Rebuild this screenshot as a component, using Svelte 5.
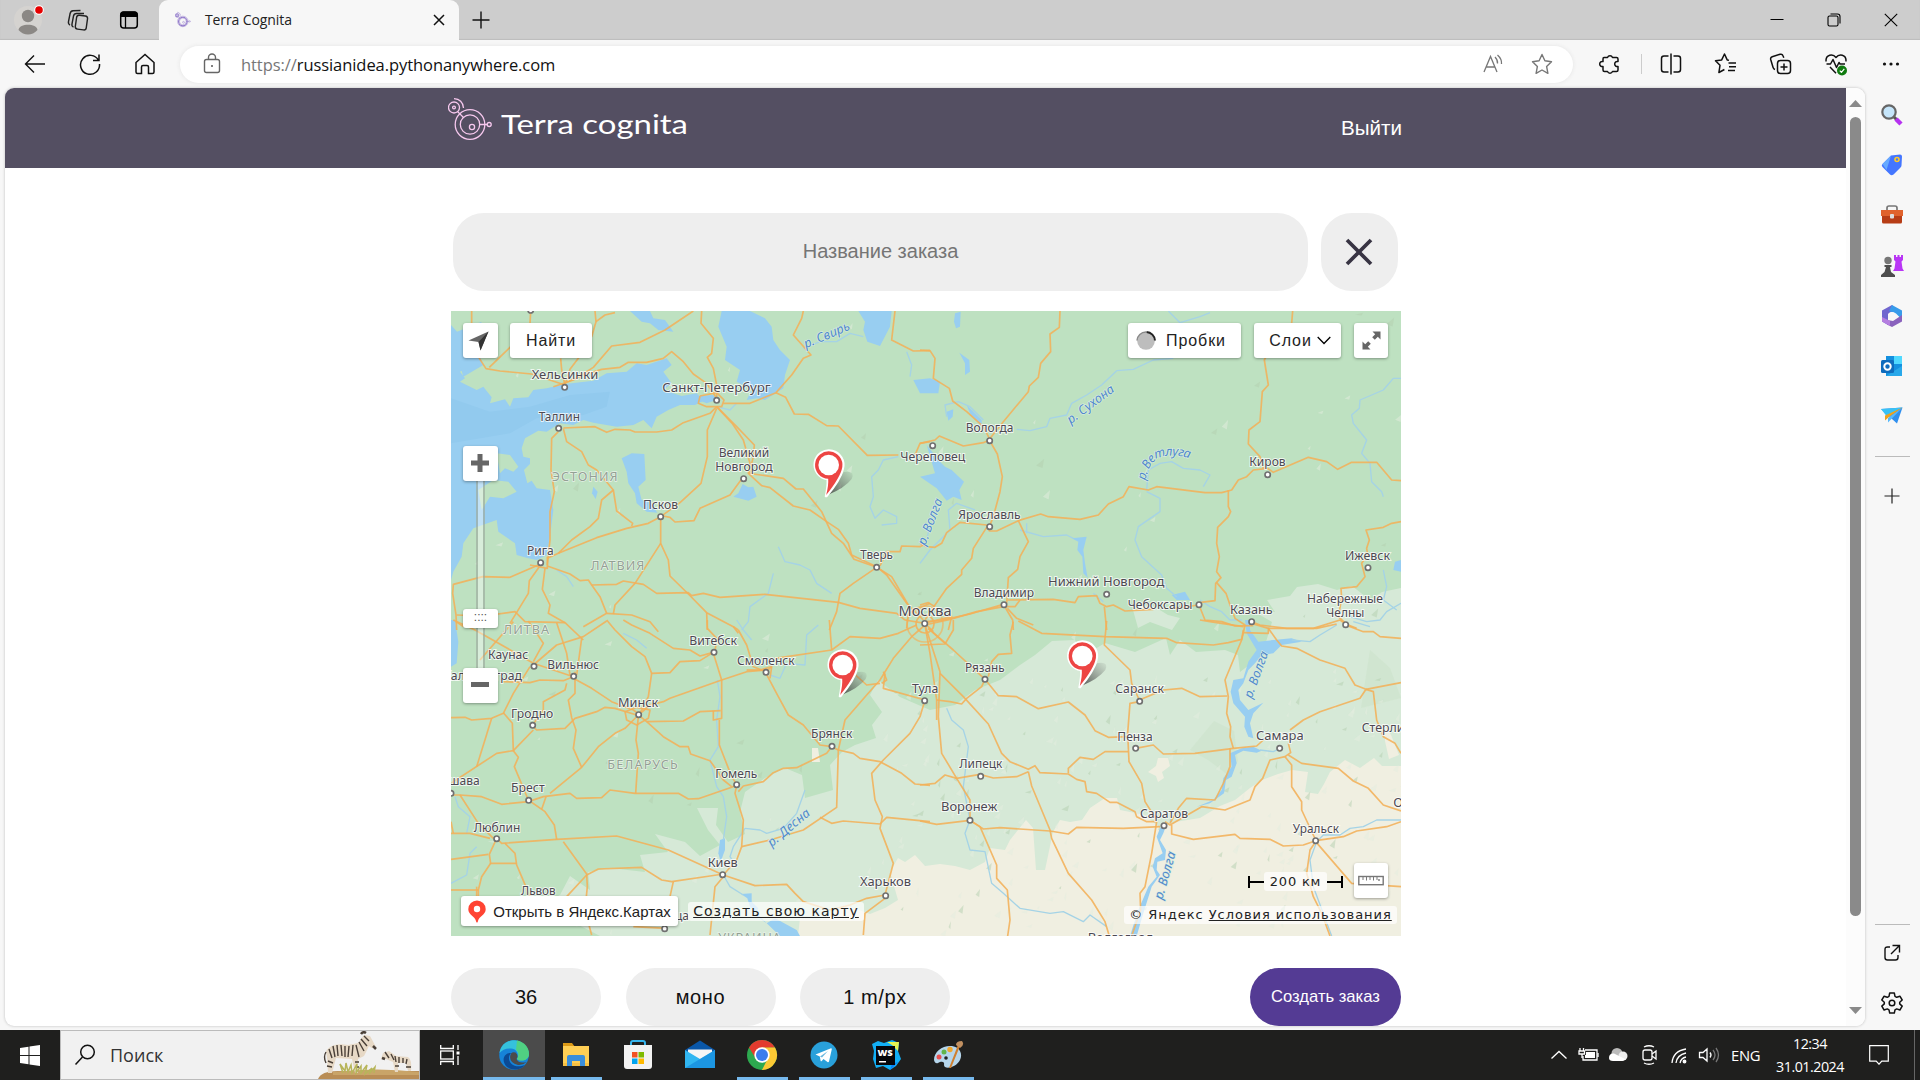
<script>
  const line = (s) => 'M' + s.trim().split(/\s+/).join('L');

  // The map is split into four tiles, each drawn in third-of-a-pixel units.
  const tiles = [
    {
      x: 450, y: 310,
      seas: [
        '3,45 25,70 45,60 30,110 55,130 35,150 60,170 30,185 45,205 30,215 80,240 100,230 125,262 120,280 165,268 180,290 190,265 235,262 250,240 290,235 345,222 430,212 470,190 530,185 560,160 590,165 650,145 665,165 640,185 665,220 640,240 695,258 740,250 760,272 735,285 690,285 655,300 620,320 605,355 580,330 550,345 500,350 430,338 400,330 370,345 330,340 290,365 265,362 225,385 215,415 220,440 240,445 240,462 222,480 232,520 245,512 260,535 300,540 310,600 300,680 290,735 260,750 235,745 200,735 195,700 145,665 140,630 70,655 40,700 35,740 10,785 3,810',
        '785,3 815,3 805,50 830,110 825,150 870,180 860,215 905,240 890,270 920,265 945,270 1000,235 1005,195 1020,150 990,120 970,90 965,50 945,25 900,3',
        '1225,3 1245,35 1240,60 1252,95 1290,108 1320,50 1325,3',
        '515,445 545,430 583,432 587,510 565,530 575,570 600,575 622,608 590,605 560,580 555,550 535,520 530,485',
        '850,560 865,550 878,522 895,532 910,530 920,560 895,572',
        '1390,210 1440,205 1470,215 1465,250 1410,250',
        '430,530 443,545 437,567 426,550',
        '540,3 600,3 610,25 645,30 670,65 625,60 600,40 575,35',
        '10,70 95,35 70,90 100,165 40,200 20,130',
        '740,258 790,255 800,270 770,280 750,272'
      ],
      land: ['140,430 180,435 205,470 190,485 165,475 150,490', '85,540 130,510 175,515 200,545 160,565 120,560 95,600'],
      rivers: ['1060,115 1110,95 1160,95 1200,70 1240,80', '1370,125 1385,165 1380,200', '1345,440 1300,450 1285,480 1265,500 1270,560 1260,590 1275,625 1300,600 1340,620 1340,640 1295,645', '985,710 1005,755 1050,765 1080,780 1100,820 1145,850', '970,790 955,850 900,890 895,935 875,960', '1440,645 1430,690', '320,780 350,800 370,830', '800,290 840,300 860,280'],
      roads: [
        '65,3 65,40 88,145 108,176 150,183 245,192 345,225', '242,5 240,40 180,112 118,172', '435,3 438,35 425,80 385,145 360,178 345,225', '438,35 465,15 495,8', '332,145 335,180 345,225',
        '310,230 370,210 430,172 485,108 570,97 645,60 730,3', '345,218 400,195 455,178 510,172 535,157 590,157 640,145 665,125 700,155 730,192 770,220 800,265',
        '755,3 753,40 790,85 785,130 772,142 790,175 800,225 800,265', '1060,3 1055,25 1030,75 1083,135 1060,145 1025,195 978,248 900,280 820,280', '978,248 1007,262 1033,312 1075,313 1130,347 1165,348 1252,436 1345,435',
        '1335,3 1325,90 1390,123 1440,122', '340,354 435,350 470,367 495,358 540,360 555,366 620,366 665,360 700,338 780,310 800,290', '325,365 305,385 303,480 313,545 300,605 300,690 292,765', '340,356 350,395 395,425 415,465 440,480 490,540 500,603 548,640 545,648',
        '490,540 455,570 445,625 420,650 365,690 325,730', '292,745 325,730 440,683 530,655 595,640 632,620', '632,620 690,578 753,520 772,440 772,360 800,295', '640,618 660,622 675,636 732,632 750,595 840,555 880,500',
        '800,290 848,342 880,390 900,460 895,490 935,527 960,533 1030,588 1080,600 1130,635 1165,658 1195,700 1205,735 1280,770 1310,795 1370,880 1420,930', '800,290 860,350 913,405 910,440 898,490 1000,505 1038,537 1060,537 1115,605 1145,670 1180,700 1212,748 1280,772 1325,800 1375,885',
        '632,620 632,700 655,750 660,798 715,852 770,908 850,950 865,970', '632,700 555,820 495,885 490,912', '292,768 360,792 390,812 415,810 425,825 500,823 520,813 580,823 620,850 715,848 725,857 760,850 810,862 945,853 1165,877 1230,895 1340,910 1365,930',
        '265,765 180,802 98,800 10,823 8,850 18,915 20,960', '268,770 238,812 235,850 180,940', '285,775 277,838 300,885 295,910 345,938', '425,825 450,860 470,910 400,950', '470,910 545,915 600,935 625,965', '20,915 100,918 195,905 225,935 345,938 400,990', '770,908 772,960', '1280,772 1210,820 1170,850 1165,877 1160,905 1138,960', '1290,768 1310,725 1350,725 1355,708 1410,710 1430,700', '240,765 292,775 292,740', '750,258 800,248 822,270 815,290 770,290 745,280 750,258', '1440,395 1410,400 1395,435', '1370,955 1375,910 1440,880', '1365,930 1425,940 1450,965', '18,935 40,950'
      ],
      cities: [
        ['Хельсинки', 245, 445, 208, 344, 232], ['Санкт-Петербург', 637, 962, 245, 800, 271], ['Таллин', 266, 390, 333, 326, 355], ['Великий', 806, 958, 440], ['Новгород', 796, 968, 482, 881, 506], ['Псков', 579, 684, 598, 632, 620], ['Рига', 231, 311, 736, 272, 758], ['Тверь', 1231, 1329, 746, 1280, 772], ['', 0, 0, 0, 242, 1]
      ],
      countries: [['ЭСТОНИЯ', 305, 503, 513], ['ЛАТВИЯ', 422, 583, 781]],
      streams: [['р. Свирь', 1068, 115, -23, 146]]
    },
    {
      x: 920, y: 310,
      seas: ['105,10 122,5 120,50 108,55 102,35', '118,128 148,150 150,185 135,195 135,160', '20,405 60,455 75,470 95,480 132,515 118,540 125,570 100,560 80,572 50,535 0,500 45,490', '140,285 160,305 185,330 185,350 150,310', '455,685 500,680 490,720 495,760 503,803 490,790 487,740 472,720 475,695', '755,855 795,845 810,870 770,870', '1425,755 1443,750 1443,785 1420,780', '80,305 100,298 98,320 85,332'],
      land: [],
      rivers: ['80,320 75,285 115,275 150,290 190,330', '290,358 330,362 380,350 390,325 440,315 455,280 500,255 545,225 590,182 640,178 700,150 760,145', '745,3 780,38 840,20 870,8', '680,540 685,480 720,460 755,455 790,475 840,480 870,495 850,530', '680,545 720,565 720,605 655,650 645,690 665,740 725,795 740,835 770,860', '300,660 370,680 440,675 460,685', '840,870 870,890 905,905 930,930 965,930', '1443,205 1420,205 1390,240 1320,270 1318,295 1295,315 1300,340 1340,390 1325,430 1350,460 1355,515 1385,545 1390,560', '520,850 550,875', '1290,920 1340,935 1380,930 1400,905 1443,880', '1390,780 1400,830 1390,870 1430,900', '0,760 30,720 90,660 85,600 110,580 165,600', '320,640 320,670'],
      roads: [
        '0,120 30,122 45,145 40,205 88,235 98,273 140,305 190,350 208,385', '420,3 418,52 390,72 392,125 362,160 355,202 328,228 325,245 250,335 208,388', '0,400 45,390 58,378 130,408 190,398 208,390', '208,390 232,432 247,500 240,545 220,620 208,650',
        '200,645 208,663 230,663 295,632 362,612 385,620 480,628 535,615 565,582 610,560 627,530 685,540 710,530 855,548 905,548 935,540 955,510 980,500 1000,480 1043,475 1060,487 1165,442 1220,455 1253,478 1295,457 1370,457 1415,510 1443,512',
        '1118,3 1115,40 1070,80 1033,150 1045,225 1027,245 1020,335 987,360 985,402 1020,440 1030,475', '925,540 925,590 932,605 925,620 893,652 890,700 898,740 890,785 903,803 887,820 885,872 837,878', '890,818 918,850 930,885 945,925 975,945 965,990',
        '200,652 160,715 155,745 125,780 125,793 80,835 45,885 15,930', '295,632 325,695 300,740 293,778 265,803 260,880', '15,935 60,932 150,912 250,883', '15,945 90,928 170,905 250,890 285,890 300,870', '262,870 400,868 465,878 475,860 530,857 540,880 560,890 580,885 615,903 700,898', '760,895 837,885 855,930 905,935 945,948 1000,947',
        '250,883 278,930 280,960', '262,895 290,925 340,945', '553,890 560,960', '1443,635 1415,640 1390,652 1338,660 1348,690 1340,715 1343,735 1325,760 1335,800 1310,830 1263,835 1265,865 1255,920 1277,940', '995,935 1020,945 1100,955 1180,955 1260,930 1277,942 1310,955', '0,700 20,710 45,712 65,700 80,668 120,637 200,645', '0,885 25,878 45,890', '10,940 95,920 85,960'
      ],
      cities: [['Вологда', 137, 280, 367, 209, 392], ['Череповец', -59, 136, 453, 38, 407], ['Ярославль', 115, 302, 626, 209, 650], ['Киров', 988, 1097, 468, 1043, 494], ['Ижевск', 1275, 1410, 751, 1344, 773], ['Нижний Новгород', 384, 733, 828, 560, 853], ['Владимир', 161, 342, 860, 252, 884], ['Чебоксары', 623, 817, 896, 837, 884], ['Казань', 930, 1058, 913, 995, 935], ['Набережные', 1161, 1389, 880], ['Челны', 1219, 1333, 921, 1277, 944]],
      countries: [],
      streams: [['р. Сухона', 452, 343, -37, 167], ['р. Волга', 16, 708, -69, 147]]
    },
    {
      x: 450, y: 620,
      seas: ['3,0 15,0 25,65 20,130 3,140', '810,660 825,655 825,690 812,725 805,700', '873,822 905,820 905,845 925,865 915,885 950,910 975,895 1040,930 1050,948 990,948 940,900 900,860 892,835'],
      land: [],
      rivers: ['1105,15 1070,45 1065,135 1010,130 990,175 960,165', '905,60 880,30 860,0', '802,180 810,230 800,300 805,380 780,420 800,500 820,530 830,590 820,660', '1065,510 1040,580 1000,625 950,640 930,630 885,625', '860,740 840,710 850,680 885,625', '820,765 840,800 880,825', '15,530 25,560 60,590 50,640', '3,790 50,765 60,700 80,680', '590,85 560,60 520,40'],
      roads: [
        '3,525 30,525 95,530 155,553 235,545 280,530 360,520 380,535 455,533 480,510 555,520 685,520 715,537 745,536 845,502 860,495', '30,525 85,610 130,655', '3,605 10,640', '3,640 60,640 120,655', '140,655 155,670 320,658 500,648 655,690 820,765', '140,655 118,703 122,730 200,730', '165,670 195,700 200,735 215,770 240,830', '3,718 115,703', '122,730 95,770 85,810 85,850',
        '235,540 285,575 313,615 320,658', '275,568 288,530', '340,665 410,762 412,800 405,870 425,945', '350,830 410,765 445,747 575,742 635,780 665,785 780,768 820,762', '670,785 660,830 650,900 643,925', '300,520 395,442 445,380 495,340 525,325 565,285', '395,442 370,385 378,330 365,293 355,240 375,220 375,170',
        '860,497 855,520 880,600 875,680 860,720 820,765', '875,680 960,660 1060,630 1160,562 1165,390 1185,300 1250,225 1290,180 1330,115 1385,50 1425,15', '1145,380 1130,400 1040,443 1000,445 970,458 940,485 880,498 865,515', '1145,380 1165,390 1210,400 1230,415 1290,425 1355,460 1395,492 1440,496', '948,160 985,230 1015,285 1060,315 1110,375 1145,380',
        '565,285 600,255 640,245 660,235 815,180 890,155 948,150', '590,305 700,303 750,275 812,272', '565,285 590,305 640,350 690,380 715,380 722,402 780,422 800,450 820,480 845,500', '565,290 558,360 565,400 557,520', '560,285 495,265 465,262 440,275 375,295 345,325 260,330 248,318', '570,285 550,270 485,245 425,205 370,175', '525,275 560,262 600,270 595,295 560,315 530,300 525,275',
        '370,170 340,182 270,180 240,188 160,185', '370,170 250,130 190,95 75,30 10,0', '380,165 395,55', '375,170 375,155', '250,135 320,75 400,50 470,3', '250,125 280,70 235,3', '320,8 350,100 360,165', '240,140 190,220 160,280 125,295 65,300 45,292 3,293', '125,295 80,440', '3,490 140,400 190,392 250,330', '190,392 205,412 193,440 235,540', '190,392 187,310 160,278', '248,315 280,270 280,245 345,210 350,190',
        '790,100 815,180 815,295 790,300 790,272', '808,300 808,375 845,470 858,490', '790,97 750,108 720,90 670,85 600,40 545,15 520,0', '772,0 772,25 800,55 795,95', '790,97 750,122 690,125 660,158 605,160 595,230 570,280', '605,160 585,110 545,80 495,30 470,0', '865,30 890,75 910,140 948,155 965,140', '850,20 865,30', '975,115 1145,90 1200,50 1290,55 1345,40 1400,15', '1145,90 1138,0', '1200,150 1250,195 1290,190', '1305,160 1300,205 1425,240', '1300,155 1310,180 1295,190',
        '1425,240 1410,290 1380,340 1300,420 1265,460 1275,540 1297,590 1290,625 1330,730 1305,825', '1110,592 1145,610 1180,603 1290,612 1310,592 1440,605', '820,765 915,797 1010,793 1035,820 1060,845 1140,870 1200,855 1250,835 1305,825', '820,770 795,800 780,945', '1305,835 1245,880 1240,945', '3,810 85,810', '948,150 890,150', '650,925 550,920', '930,150 965,140 960,175', '90,120 190,5', '80,800 80,830'
      ],
      cities: [['Витебск', 718, 861, 76, 792, 97], ['Каунас', 114, 235, 116, 252, 139], ['Вильнюс', 292, 447, 148, 371, 169], ['Смоленск', 861, 1034, 135, 948, 157], ['Калининград', -20, 216, 180], ['Минск', 504, 625, 262, 566, 284], ['Гродно', 183, 310, 293, 248, 316], ['Брянск', 1083, 1207, 355, 1146, 379], ['Варшава', -69, 89, 495, 3, 520], ['Брест', 183, 284, 516, 236, 541], ['Гомель', 796, 922, 473, 860, 494], ['Люблин', 71, 211, 636, 140, 656], ['Киев', 773, 863, 742, 818, 764], ['Львов', 213, 317, 824], ['Харьков', 1230, 1383, 799, 1307, 827], ['Винница', 563, 717, 901, 644, 926]],
      countries: [['ЛИТВА', 160, 297, 43], ['БЕЛАРУСЬ', 472, 683, 447], ['УКРАИНА', 805, 992, 966]],
      streams: [['р. Десна', 965, 682, -40, 154]]
    },
    {
      x: 920, y: 620,
      seas: ['975,0 990,0 990,30 1015,65 1060,60 1115,55 1145,65 1085,75 1060,100 1025,105 1005,130 985,150 970,190 955,210 960,240 985,270 1030,248 1000,280 990,310 1000,355 985,350 973,320 975,290 940,250 932,215 940,180 970,175 985,125 1010,90 980,40', '965,385 1000,380 1025,392 1010,398 970,392 945,405 950,430 935,470 918,480 912,520 870,550 830,560 880,540 905,510 910,475 935,440 930,400', '710,650 720,625 740,610 730,640 720,660 738,690 735,720 712,725 710,750 720,765 695,800 670,880 650,948 630,948 655,870 685,800 710,770 698,740 705,715 728,700'],
      land: [],
      rivers: ['80,265 95,300 130,330 145,380 130,500 150,600 135,640 150,690 195,695 215,790 250,820 300,865 390,880 430,875 490,905 510,885 560,920', '1020,390 1060,395 1080,385', '1115,60 1170,65 1200,45 1250,15', '1443,600 1370,600 1330,620 1290,625 1260,645 1210,645 1190,665 1170,720 1180,800 1235,948', '1300,5 1350,20', '750,605 755,590'],
      roads: [
        '25,25 100,90 195,178 235,227 290,230 355,266 445,246 495,285 525,332 565,352 625,350', '195,178 185,200 140,235 125,252 90,245 50,240', '205,170 215,125 235,103 275,100 270,45 280,5', '15,15 60,155 55,290 65,400 110,475 150,540 150,600', '15,15 30,100 50,240 50,300', '60,160 130,230 205,312 245,400 270,425 325,448 345,437 360,458 445,462 470,478 495,485 500,515 530,520 570,547 590,547 645,575 650,590 680,605 710,605',
        '445,460 445,445 480,412 520,418 555,395 625,395', '0,495 45,490 75,465 110,475 180,463 220,474 290,470 325,455', '0,603 50,613 150,601 190,627 240,623 390,633 445,642 470,622 610,625 720,620', '325,455 335,498 390,630 395,655 445,760 515,840 555,905 568,948', '150,601 180,620 230,735 230,775 262,810 270,900 263,948',
        '560,3 553,75 630,150 635,190 658,240', '295,3 365,40 555,50 740,55 770,68 880,75 925,68 965,58 970,30', '658,245 630,250 623,340 627,425 665,490 675,545 710,600', '658,240 730,210 785,205 840,230 922,228', '965,60 915,180 925,230 920,280 932,320 930,350 940,385', '647,385 700,375 730,402 825,400 940,385 1010,378 1030,360', '930,385 930,440 910,490 885,540 800,535 775,565 750,610',
        '735,605 750,615 845,560 915,570 990,540 1005,500 1028,475 1050,420 1095,410 1112,398 1105,370', '1110,330 1150,300 1200,275 1320,235 1338,208 1305,195 1275,145 1200,120 1130,85 1085,78 1070,60 1045,25', '1338,208 1443,188', '1338,208 1360,215 1370,300 1390,350 1425,370 1443,400', '1095,410 1115,435 1115,500 1145,545 1145,570 1187,660', '1105,405 1145,430 1255,445 1300,483 1345,505 1390,555 1443,573',
        '755,615 755,642 820,658 945,643 960,655 1050,658 1090,678 1150,675 1187,662 1270,650 1310,633 1400,620 1443,605', '1187,665 1170,690 1160,760 1180,830 1205,880 1230,948', '1187,665 1295,790 1443,800', '710,605 695,700 675,800 660,820 662,870 635,948', '970,38 1045,40 1045,25 1000,12', '1277,15 1330,35 1360,35 1380,50 1443,55', '840,0 870,5 970,20', '1045,25 1190,25 1250,12', '0,75 75,72 100,30 100,0', '25,25 75,70'
      ],
      cities: [['Рязань', 135, 254, 157, 195, 178], ['Саранск', 586, 732, 219, 659, 244], ['Тула', -24, 55, 218, 14, 242], ['Пенза', 592, 698, 364, 647, 385], ['Самара', 1008, 1151, 360, 1079, 385], ['Стерлитамак', 1325, 1560, 337], ['Липецк', 118, 247, 445, 182, 469], ['Воронеж', 63, 232, 574, 150, 601], ['Саратов', 660, 804, 593, 732, 617], ['Уральск', 1118, 1257, 638, 1187, 662], ['Оренбург', 1420, 1600, 561], ['Волгоград', 503, 700, 966]],
      countries: [],
      streams: [['р. Волга', 995, 237, -70, 147], ['р. Волга', 727, 840, -74, 147]]
    }
  ];

  // Scattered clearings: small pale facets with a fixed seed.
  let seed = 41;
  const rnd = () => (seed = (seed * 16807) % 2147483647) / 2147483647;
  const facets = Array.from({ length: 330 }, (_, i) => {
    const x = 451 + rnd() * 950;
    const y = i < 130 ? 311 + rnd() * 625 : 680 + rnd() * 250;
    const px = i < 130 ? x : 890 + rnd() * 511;
    const w = 2 + rnd() * 6, h = 2 + rnd() * 5;
    return { d: `M${px},${y}l${w},${-h}l${-w * 0.2},${h * 1.4}z`, dark: rnd() > 0.65 };
  });

  const markers = [[828.7, 465], [842.7, 665], [1082.3, 656]];
  const running = new Set(['explorer', 'chrome', 'telegram', 'webstorm', 'paint', 'edge']);
  const apps = ['edge', 'explorer', 'store', 'mail', 'chrome', 'telegram', 'webstorm', 'paint'];
  const bar = ['puzzle', 'split', 'favs', 'collections', 'health', 'more'];
  const side = ['search', 'tag', 'tools', 'games', 'm365', 'outlook', 'send'];
  const tray = ['up', 'battery', 'cloud', 'meet', 'wifi', 'sound'];
</script>

{#snippet brand()}
  <g fill="none" stroke-width="1.3">
    <circle cx="6" cy="9.5" r="5.5" /><circle cx="6" cy="9.5" r="1.4" />
    <path d="M6 .7C12 1 15 5 15.500 10M9.500 13.500L16 20" />
    <circle cx="22" cy="26.500" r="14.800" /><circle cx="22" cy="26.500" r="9.700" /><circle cx="24" cy="29" r="2.600" />
    <path d="M31 26.500h8" /><circle cx="41.200" cy="26.500" r="2" />
  </g>
{/snippet}

<div class="screen">
  <div class="tabs">
    <div class="slot avatar"><svg width="32" height="36" viewBox="0 0 32 36"><circle cx="16" cy="18" r="14" fill="#d5d3d0" /><circle cx="16" cy="14" r="6.200" fill="#8b8885" /><path d="M6.500 28C7 21 25 21 25.500 28C20 34 12 34 6.500 28z" fill="#8b8885" /><circle cx="27" cy="8" r="4.800" fill="#fff" /><circle cx="27" cy="8" r="3.800" fill="#e60000" /></svg></div>
    <div class="slot spaces"><svg width="22" height="22" viewBox="0 0 22 22" fill="none" stroke="#222" stroke-width="1.400"><rect x="9" y="6.500" width="11" height="14" rx="2.500" transform="rotate(8 14 13)" /><path d="M6.500 18Q4.500 17.500 5 15L6.500 7Q7 4.500 9.500 4.500L17 4.500M3 16Q1 15 1.500 12.500L3 5Q3.500 2 6 1.800L13.500 1.500" /></svg></div>
    <div class="slot actions"><svg width="20" height="20" viewBox="0 0 20 20"><rect x="1.700" y="2" width="16.600" height="16" rx="3" fill="none" stroke="#000" stroke-width="1.500" /><path d="M1.500 7V4.500Q1.500 1.500 4.500 1.500h11Q18.500 1.500 18.500 4.500V7z" /><path d="M6.500 7v11" stroke="#000" stroke-width="1.300" /></svg></div>
    <div class="tab">
      <svg class="fav" width="16" height="18" viewBox="0 0 45 45" stroke="#8d74c9"><g>{@render brand()}</g><circle cx="22" cy="27" r="12" fill="none" stroke-width="3" /><circle cx="6" cy="9.500" r="4" fill="none" stroke-width="2.500" /></svg>
      <span>Terra Cognita</span>
      <svg width="12" height="12" viewBox="0 0 12 12"><path d="M1 1l10 10M11 1L1 11" stroke="#111" stroke-width="1.500" /></svg>
    </div>
    <div class="slot newtab"><svg width="18" height="18" viewBox="0 0 18 18"><path d="M9 .5v17M.5 9h17" stroke="#111" stroke-width="1.400" /></svg></div>
    <div class="win">
      <svg width="14" height="14" viewBox="0 0 14 14"><path d="M.5 6.500h13" stroke="#000" /></svg>
      <svg width="14" height="14" viewBox="0 0 14 14" fill="none" stroke="#000" stroke-width="1.100"><rect x="1" y="3" width="10" height="10" rx="1.500" /><path d="M3.500 1h7Q13 1 13 3.500v7" /></svg>
      <svg width="14" height="14" viewBox="0 0 14 14"><path d="M.8.8l12.400 12.400M13.200.8L.8 13.200" stroke="#000" stroke-width="1.100" /></svg>
    </div>
  </div>

  <div class="toolbar">
    <div class="nav">
      <svg width="24" height="24" viewBox="0 0 24 24" fill="none" stroke="#111" stroke-width="1.400"><path d="M22 12H2.500M11 3.500L2.500 12l8.500 8.500" /></svg>
      <svg width="24" height="24" viewBox="0 0 24 24" fill="none" stroke="#111" stroke-width="1.500"><path d="M20.500 8.500A9.500 9.500 0 1 0 21.500 12M21 2.500v6h-6" /></svg>
      <svg width="24" height="24" viewBox="0 0 24 24" fill="none" stroke="#111" stroke-width="1.500"><path d="M3 10.500L12 2.500l9 8V20q0 1.500-1.500 1.500h-4V15q0-1.500-1.500-1.500h-4Q8.500 13.500 8.500 15v6.500h-4Q3 21.500 3 20z" /></svg>
    </div>
    <div class="address">
      <svg width="20" height="22" viewBox="0 0 20 22" fill="none" stroke="#666" stroke-width="1.400"><rect x="2.500" y="6.500" width="15" height="13" rx="2" /><path d="M6.500 6.500V4.500a3.500 3.500 0 0 1 7 0v2" /><circle cx="10" cy="13" r="1" fill="#555" stroke="none" /></svg>
      <p class="url"><i>https://</i>russianidea.pythonanywhere.com</p>
      <div class="inbar">
        <svg width="22" height="22" viewBox="0 0 22 22" fill="none" stroke="#777" stroke-width="1.300"><path d="M2 19L8.500 3.500L15 19M4.500 14h8M13 4q3 3 2.500 6.500M15.500 2q4.500 4 4 9" /></svg>
        <svg width="22" height="22" viewBox="0 0 22 22" fill="none" stroke="#777" stroke-width="1.400" stroke-linejoin="round"><path d="M11 1.500l2.900 6.300 6.600.9-4.900 4.700 1.300 6.900L11 17l-5.900 3.300 1.300-6.900L1.500 8.700l6.600-.9z" /></svg>
      </div>
    </div>
    <div class="actions-right">
      {#each bar as name}
        <svg width="24" height="24" viewBox="0 0 24 24" fill="none" stroke="#111" stroke-width="1.500" stroke-linejoin="round">
          {#if name === 'puzzle'}<path d="M6 5.500h3.500a2.700 2.700 0 0 1 5 0H18.500q1.500 0 1.500 1.500V9.500a2.600 2.600 0 1 0 0 5V18q0 1.500-1.500 1.500h-4a2.700 2.700 0 0 1-5 0H6.500Q5 19.500 5 18v-3.500a2.600 2.600 0 1 1 0-5V7q0-1.500 1-1.500z" />
          {:else if name === 'split'}<path d="M9.500 4H5Q2.500 4 2.500 6.500v11Q2.500 20 5 20h4.500M14.500 4H19q2.500 0 2.500 2.500v11Q21.500 20 19 20h-4.500M12 1.500v21" />
          {:else if name === 'favs'}<path d="M15 8.200l-1.800-.3L10.500 2 7.700 7.900l-6.200.9 4.500 4.500-1.100 7.200 5.500-3M14.500 11H22M15 14.800h7M14 18.500h7" />
          {:else if name === 'collections'}<rect x="8.500" y="8.500" width="13" height="13" rx="3" /><path d="M15 11.500v7M11.500 15h7M6 17.500Q4.500 17 4 15.200L1.700 7.500Q1.200 5.500 3.200 4.700L11 2.300q2.300-.6 3 1.400l.8 2" />
          {:else if name === 'health'}<path d="M2 9.500C1.500 2 9 1.500 12 5.500C15 1.500 22.500 2 22 9.500M2.500 12H6.500l2.500-4.500 3.500 8 2.500-5 1 1.500H21M6 15l6 6.200" /><circle cx="18" cy="18.500" r="5" fill="#0f7b0f" stroke="none" /><path d="M15.800 18.700l1.600 1.600 2.900-3.400" stroke="#fff" stroke-width="1.200" />
          {:else}<g fill="#111" stroke="none"><circle cx="5.500" cy="12" r="1.600" /><circle cx="12" cy="12" r="1.600" /><circle cx="18.500" cy="12" r="1.600" /></g>{/if}
        </svg>
        {#if name === 'puzzle'}<b></b>{/if}
      {/each}
    </div>
  </div>

  <div class="body">
    <main class="page">
      <div class="content">
        <header>
          <svg class="logo" width="260" height="52" viewBox="0 0 260 52"><g stroke="#f6c8ee">{@render brand()}</g><text x="53" y="35.500" textLength="187" lengthAdjust="spacingAndGlyphs">Terra cognita</text></svg>
          <a class="exit" href="#exit">Выйти</a>
        </header>
        <div class="form">
          <div class="title-row">
            <div class="title">Название заказа</div>
            <button class="close" aria-label="Закрыть"><svg width="28" height="28" viewBox="0 0 28 28"><path d="M2 2l24 24M26 2L2 26" stroke="#383443" stroke-width="3.700" /></svg></button>
          </div>

          <div class="map">
            <svg class="canvas" width="950" height="625" viewBox="451 311 950 625">
              <defs>
                <linearGradient id="shade" x1="0" y1="1" x2="1" y2="0"><stop offset="0" stop-color="#333" stop-opacity=".8" /><stop offset="1" stop-color="#555" stop-opacity=".05" /></linearGradient>
                <path id="vetluga" d="M676,512 Q690,447 728,440 Q775,430 825,452" />
              </defs>
              <rect x="451" y="311" width="950" height="625" fill="#bee1c1" />
              <path fill="#d6e9d7" d="M1401,588L1382,592L1370,600L1352,586L1337,590L1318,584L1297,587L1290,596L1267,600L1275,612L1255,612L1272,622L1262,655L1240,672L1238,655L1225,650L1196,652L1180,640L1170,655L1166,638L1135,652L1105,643L1085,655L1075,640L1052,641L1035,655L1020,665L1000,680L975,690L955,705L930,710L900,697L878,680L870,695L882,712L872,725L876,738L855,745L842,752L830,765L833,790L805,798L802,775L785,768L765,778L745,792L740,812L745,834L728,842L716,825L718,808L697,808L708,830L720,845L700,856L685,842L655,834L668,852L640,855L645,872L610,868L588,872L590,890L570,876L560,895L540,905L600,936L1401,936Z" />
              <path fill="#d6e9d7" d="M1133,610L1150,604L1168,615L1180,618L1172,630L1150,622L1138,628Z" />
              <path fill="#f0efe1" d="M1401,766L1382,766L1374,758L1360,768L1345,760L1330,772L1324,784L1318,794L1305,792L1308,772L1292,770L1278,774L1262,780L1250,788L1235,800L1220,806L1200,818L1175,822L1160,828L1145,815L1120,810L1117,798L1105,798L1090,808L1082,820L1070,822L1060,820L1053,832L1045,870L1036,870L1033,828L1026,820L1010,840L1005,850L990,848L985,862L970,870L955,866L940,864L925,866L915,855L905,862L898,858L890,872L898,900L885,908L870,914L845,905L820,920L800,918L798,936L1401,936Z" />
              <path fill="#f0efe1" d="M1148,772l8,-6l2,-8l10,0l2,8l-8,6l2,6l-6,4l-2,-6zM1384,725l7,10l8,20l-10,4l-4,-18zM812,748l6,0l2,14l-8,0z" />
              <path fill="#c5dfc4" d="M1190,750l18,10l20,15l10,-14l-4,-30l-20,-10zM1370,650l20,18l11,30l-40,10z" opacity=".35" />
              {#each facets as f}<path d={f.d} fill={f.dark ? '#b3d0b0' : '#e3eedf'} opacity=".5" />{/each}
              {#each tiles as t}
                <g transform="translate({t.x} {t.y}) scale(.33333)">
                  {#each t.seas as s}<path d={line(s) + 'Z'} fill="#98cef1" />{/each}
                  {#if t.y === 310 && t.x === 450}<path d="M3,265L120,305L240,290L360,255L480,245L470,290L400,315L260,325L180,370L3,400Z" fill="#92caee" />{/if}
                  {#each t.land as s}<path d={line(s) + 'Z'} fill="#bee1c1" />{/each}
                  {#each t.rivers as s}<path d={line(s)} class="river" />{/each}
                </g>
              {/each}
              {#each tiles as t}
                <g transform="translate({t.x} {t.y}) scale(.33333)">
                  {#each t.roads as s}<path d={line(s)} class="road" />{/each}
                </g>
              {/each}
              <circle cx="925" cy="624" r="9" class="road ring" />
              <circle cx="925" cy="624" r="18" class="road ring outer" />
              {#each tiles as t}
                <g transform="translate({t.x} {t.y}) scale(.33333)">
                  {#each t.countries as [n, l, r, y]}<text class="country" x={l} {y} textLength={r - l}>{n}</text>{/each}
                  {#each t.streams as [n, x, y, a, w]}<text class="stream" transform="translate({x} {y}) rotate({a})" textLength={w}>{n}</text>{/each}
                  {#if t.x === 920 && t.y === 310}<text class="stream"><textPath href="#vetluga" textLength="176">р. Ветлуга</textPath></text>{/if}
                  {#each t.cities as [n, l, r, y, cx, cy]}
                    {#if cx !== undefined}<circle {cx} {cy} r="8" fill="#fff" stroke="#707070" stroke-width="5" />{/if}
                    {#if n}<text class="city" x={l} {y} textLength={r - l} lengthAdjust="spacingAndGlyphs">{n}</text>{/if}
                  {/each}
                </g>
              {/each}
              <circle cx="924.700" cy="623.500" r="2.700" fill="#fff" stroke="#707070" stroke-width="1.600" />
              <text class="moscow" x="898.500" y="616" textLength="53" lengthAdjust="spacingAndGlyphs">Москва</text>
              {#each markers as [x, y]}
                <g transform="translate({x} {y})">
                  <path d="M-1 30L15 7Q27 5 23 14Q16 23 -1 30z" fill="url(#shade)" />
                  <path d="M-3.200 31.500Q-1 20 -1.500 14.500A14.800 14.800 0 1 1 14.500 4Q12 15 -2 31.500z" fill="#fff" stroke="#fff" stroke-width="1.500" stroke-linejoin="round" />
                  <path d="M-2.500 30Q0 20 -.5 13.700A13.700 13.700 0 1 1 13.600 2Q12 12 -2.500 30z" fill="#ed4543" />
                  <circle r="10.300" fill="#fff" />
                </g>
              {/each}
            </svg>
            <button class="ctl locate" aria-label="Моё местоположение"><svg width="21" height="20" viewBox="0 0 21 20"><path d="M.5 9.500L20.500.5L12.500 19.500L10.500 11z" fill="#666" /><path d="M20.500.5L12.500 19.500L10.500 11z" fill="#333" /></svg></button>
            <button class="ctl find">Найти</button>
            <button class="ctl traffic"><svg width="20" height="20" viewBox="0 0 20 20"><circle cx="10" cy="10" r="8.800" fill="#bdbdbd" /><path d="M10.500 1A9 9 0 0 1 19 9.500" fill="none" stroke="#222" stroke-width="2" /><path d="M1 9.500A9 9 0 0 1 10 1" fill="none" stroke="#8a8a8a" stroke-width="1.500" /></svg>Пробки</button>
            <button class="ctl layers">Слои<svg width="14" height="9" viewBox="0 0 14 9"><path d="M.7 1L7 7.500L13.300 1" fill="none" stroke="#000" stroke-width="1.300" /></svg></button>
            <button class="ctl full" aria-label="На весь экран"><svg width="19" height="19" viewBox="0 0 19 19"><path d="M10.500.5h8v8l-2.700-2.700-3 3-2.600-2.600 3-3zM8.500 18.500h-8v-8l2.700 2.700 3-3 2.600 2.600-3 3z" fill="#666" /></svg></button>
            <div class="zoom">
              <button class="ctl" aria-label="Приблизить"><svg width="18" height="18" viewBox="0 0 18 18"><path d="M9 0v18M0 9h18" stroke="#666" stroke-width="5" /></svg></button>
              <div class="track"><span class="handle">::::</span></div>
              <button class="ctl" aria-label="Отдалить"><svg width="18" height="18" viewBox="0 0 18 18"><path d="M0 8.500h18" stroke="#666" stroke-width="5" /></svg></button>
            </div>
            <a class="ctl open" href="#maps"><svg width="18" height="23" viewBox="0 0 18 23"><path d="M9 .5A8.700 8.700 0 0 0 .3 9.200C.3 15 7 15.500 8.300 22q.7 1 1.400 0C11 15.500 17.700 15 17.700 9.200A8.700 8.700 0 0 0 9 .5z" fill="#ff4433" /><circle cx="9" cy="9" r="3.200" fill="#fff" /></svg>Открыть в Яндекс.Картах</a>
            <a class="note create" href="#create">Создать свою карту</a>
            <div class="scale"><i></i><span>200 км</span><i class="end"></i></div>
            <button class="ctl ruler" aria-label="Линейка"><svg width="26" height="11" viewBox="0 0 26 11" fill="none" stroke="#777"><rect x=".8" y="1.500" width="24.400" height="8.200" stroke-width="1.400" /><path d="M5 2v3M8.500 2v3.500M12 2v3M15.500 2v3.500M19 2v3" /><circle cx="21" cy="5" r=".6" /></svg></button>
            <div class="note copy">© Яндекс <a href="#terms">Условия использования</a></div>
          </div>

          <div class="options">
            <div class="pill">36</div>
            <div class="pill">моно</div>
            <div class="pill">1 m/px</div>
            <button class="submit">Создать заказ</button>
          </div>
        </div>
      </div>
      <div class="scrollbar">
        <svg width="13" height="8" viewBox="0 0 13 8"><path d="M6.500 0L13 7H0z" fill="#8a8a8a" /></svg>
        <div class="thumb"></div>
        <svg class="down" width="13" height="8" viewBox="0 0 13 8"><path d="M0 0h13L6.500 7z" fill="#8a8a8a" /></svg>
      </div>
    </main>
    <aside>
      <div class="side-top">
        {#each side as name}
          <svg width="24" height="24" viewBox="0 0 24 24">
            {#if name === 'search'}<path d="M14 14l2.500 2.500" stroke="#555" stroke-width="3" /><path d="M16 16l5 5" stroke="#b632f0" stroke-width="4.500" /><circle cx="9" cy="9" r="6.700" fill="#c5e5fa" stroke="#666" stroke-width="2.200" />
            {:else if name === 'tag'}<path d="M11 2.500L20 1.500q2 0 2 2l-.5 9q0 1-1 2l-7 7q-2 1.500-3.500 0L2.500 14q-1.500-1.500 0-3z" fill="#4476ff" /><path d="M11 2.500L2.500 11l4 6z" fill="#67aaff" /><circle cx="17" cy="6.500" r="2" fill="#4476ff" stroke="#ffc928" stroke-width="1.600" />
            {:else if name === 'tools'}<path d="M7 7V5q0-2 2-2h6q2 0 2 2v2" fill="none" stroke="#777" stroke-width="1.700" /><path d="M1 7h22v6H1z" fill="#e0622c" /><path d="M2 13h20v6q0 1.500-1.500 1.500h-17Q2 20.500 2 19z" fill="#b73d16" /><rect x="10" y="11" width="4" height="4.500" rx="1" fill="#ddd" />
            {:else if name === 'games'}<path d="M14 1h2v2h1.500V1h2v2H21V1h2v5l-1.500 1.500 1 7L24 17H13l1.500-2.500 1-7L14 6z" fill="#b936f5" /><circle cx="8" cy="6.500" r="3.700" fill="#777" /><path d="M4.500 11h7v2h-1.500l1 5L15 21v2H1v-2l3.500-3 1.500-5H4.500z" fill="#4d4d4d" />
            {:else if name === 'm365'}<path d="M12 1L2 6.500v11L8 21V10l8-4.500z" fill="#7066cf" /><path d="M12 1l10 5.500v9L16 9.500 9 7z" fill="#379bea" /><path d="M22 11v6.500L12 23l-5-2.500V16l6 1z" fill="#8a62bd" /><path d="M2 13v4.500L10 22v-5z" fill="#b57ee0" /><circle cx="12" cy="12" r="4" fill="#f7f7f7" />
            {:else if name === 'outlook'}<path d="M6 2h16v20H6z" fill="#1490df" /><path d="M14 2h8v8h-8z" fill="#50d9ff" /><path d="M6 22L22 12v10z" fill="#28a8ea" /><rect x="1" y="6" width="13" height="13" rx="1.500" fill="#0f6cbd" /><circle cx="7.500" cy="12.500" r="3.200" fill="none" stroke="#fff" stroke-width="2" />
            {:else}<path d="M1 5L22.500 3.500L17 19.500L12 15z" fill="#2f8fef" /><path d="M1 5L22.500 3.500L6.500 12z" fill="#39c1f5" /><path d="M22.500 3.500L5 11.500v5l4-3.500z" fill="#f0a31c" /><path d="M22 4L8 14v4.500z" fill="#58b9fb" />{/if}
          </svg>
        {/each}
      </div>
      <hr />
      <svg class="add" width="16" height="16" viewBox="0 0 16 16"><path d="M8 .5v15M.5 8h15" stroke="#222" stroke-width="1.200" /></svg>
      <div class="side-end">
        <hr />
        <svg class="ext" width="20" height="20" viewBox="0 0 20 20" fill="none" stroke="#111" stroke-width="1.400"><path d="M8 4H5.500Q3 4 3 6.500v8Q3 17 5.500 17h8q2.500 0 2.500-2.500V12M10.500 2.500h7v7M17.500 2.500L9 11" /></svg>
        <svg width="24" height="24" viewBox="0 0 24 24" fill="none" stroke="#111" stroke-width="1.500" stroke-linejoin="round"><path d="M9.700 2h4.600l.7 3.300 1.700 1 3.200-1.100L22.200 9l-2.500 2.200v1.700l2.500 2.200-2.300 3.900-3.200-1.100-1.700 1-.7 3.200H9.700L9 18.900l-1.700-1L4.100 19l-2.300-3.900 2.500-2.200v-1.700L1.800 9l2.300-3.800 3.200 1.100 1.700-1z" /><circle cx="12" cy="12" r="2.800" /></svg>
      </div>
    </aside>
  </div>

  <footer>
    <div class="start"><svg width="20" height="21" viewBox="0 0 20 21" fill="#fff"><path d="M0 3l8.500-1.300V10H0zM9.500 1.500L20 0v10H9.500zM0 11h8.500v8.300L0 18zM9.500 11H20v10L9.500 19.500z" /></svg></div>
    <div class="search">
      <svg width="22" height="22" viewBox="0 0 22 22" fill="none" stroke="#111" stroke-width="1.500"><circle cx="13.500" cy="8" r="6.800" /><path d="M8.500 13L1.500 20.500" /></svg>
      <span>Поиск</span>
      <svg class="zebra" width="101" height="48" viewBox="0 0 101 48">
        <path d="M0 48Q3 40 20 40L101 40V48z" fill="#b98d55" /><path d="M15 41Q60 36 101 41v3H15z" fill="#c9a468" />
        <g fill="#e7d9c6"><path d="M8 20Q14 11 30 14L40 12L46 4L52 5L58 16Q55 19 51 15L46 25L40 28V42H37L34 28L18 27L14 42H10L9 27z" /><path d="M65 22L71 20L78 25L90 26Q94 28 93 40H90L88 32L80 32V41H77L75 31L68 28L63 28z" /></g>
        <g fill="none" stroke="#4a4038" stroke-width="1.400"><path d="M8 21Q5 26 8 32M11 18l3 9M15 15l2 11M19 14l1 11M23 14l1 11M27 15v11M31 15l-1 11M35 14l-1 11M38 14l3 12M41 11l5 9M43 8l6 7M46 5l5 5M10 30l5 2M9 35l5 1M37 31h4M37 36h4M73 23l3 6M77 25l1 6M81 26v6M85 27v5M89 28l-1 5M77 35h4M88 36h5M67 21l4 6" /><path d="M43 3q2-3 5-1M55 15l3 3M64 27l3 1" stroke-width="2.500" /></g>
        <path d="M25 42l-3-9 5 7 1-8 2 9 3-7 1 8 5-9-1 9 5-7v7l6-8-2 9 7-6-3 6 6-7-1 6" fill="none" stroke="#b7b55a" stroke-width="1.500" />
      </svg>
    </div>
    <div class="task"><svg width="20" height="20" viewBox="0 0 20 20" fill="none" stroke="#fff" stroke-width="1.300"><path d="M.7 0v3.500h12.600V0M.7 20v-3.500h12.600V20M18 0v5M18 11v9" /><rect x=".7" y="6" width="12.600" height="8" /><path d="M16.500 8h3" stroke-width="3" /></svg></div>
    {#each apps as app}
      <div class="app" class:active={app === 'edge'} class:running={running.has(app)}>
        <svg width="32" height="32" viewBox="0 0 32 32">
          {#if app === 'edge'}<circle cx="16" cy="16" r="14.800" fill="#1683d8" /><path d="M1.500 14C3 4 11 1 17 1.200C26 2 31 9 31 15C31 22 22 23 19 20C21 17 20 10 13 9.500C8 9 4 11 1.500 14z" fill="#35c1dc" /><path d="M19 1.500C27 3 31 9 31 15C31 22 22 23 19 20C21 17 21 13 18 11z" fill="#58d36c" opacity=".8" /><path d="M13 14C7 21 15 31 27 26C22 32 13 31 9 28C2 21 7 13 13 14z" fill="#0b4a94" /><path d="M13 14.500q-3.500 8.500 7 11.500q5 .5 8.500-3q-8 2-10-3q2.500-3.500-1-6.500q-3-1-4.500 1z" fill="#4b4b4b" />
          {:else if app === 'explorer'}<path d="M3 4h9l3 4H3z" fill="#dc9a17" /><path d="M3 7h26v19H3z" fill="#ffcf55" /><path d="M3 24h26v3H3z" fill="#f7c043" /><path d="M7 27V18q0-2 2-2h14q2 0 2 2v9h-5v-5h-8v5z" fill="#3a8edb" />
          {:else if app === 'store'}<path d="M9 8V4q0-2 2-2h10q2 0 2 2v4" fill="none" stroke="#35b5ee" stroke-width="2" /><path d="M2 6h28v21q0 3-3 3H5q-3 0-3-3z" fill="#f2f2f2" /><path d="M10 13h5.500v5.500H10z" fill="#f25022" /><path d="M16.500 13H22v5.500h-5.500z" fill="#7fba00" /><path d="M10 19.500h5.500V25H10z" fill="#00a4ef" /><path d="M16.500 19.500H22V25h-5.500z" fill="#ffb900" />
          {:else if app === 'mail'}<path d="M1 11L16 1.500L31 11V20H1z" fill="#0a57a8" /><path d="M4 10.500h24V20H4z" fill="#f5f5f5" /><path d="M1 11L16 20 31 11V29H1z" fill="#31b6f1" /><path d="M1 29L31 11V29z" fill="#1489dc" opacity=".7" />
          {:else if app === 'chrome'}<circle cx="16" cy="16" r="15" fill="#2da94f" /><path d="M3 8.500A15 15 0 0 1 29 8.500L16 9L10 20z" fill="#e33b2e" /><path d="M29 8.500A15 15 0 0 1 16 31L22 19L16 8.500z" fill="#fcc934" /><circle cx="16" cy="16" r="7.700" fill="#fff" /><circle cx="16" cy="16" r="6" fill="#3b7ded" />
          {:else if app === 'telegram'}<circle cx="16" cy="16" r="13.500" fill="#29a0da" /><path d="M7.500 15.500L23 9.300q1 0 .8 1L21 22.500q-.6 1-1.500.4L15.500 20l-2 2.200q-.7.5-.9-.5l-.8-4.200z" fill="#fff" /><path d="M12 17.500l8-5.500-6 6.500z" fill="#6bb8df" />
          {:else if app === 'webstorm'}<path d="M2 5L8 2L14 4L22 1L29 4L28 12L31 20L26 27L20 31L13 27L6 29L3 20L4 12z" fill="#12aef4" /><path d="M17 3l12 0-1 9-6-6z" fill="#e6f452" /><path d="M22 25l6-2-8 8z" fill="#077cfb" /><path d="M6 7h19v19H6z" fill="#06070b" /><text x="7.500" y="16.500" class="ws">WS</text><path d="M9 22h7v1.500H9z" fill="#fff" />
          {:else}<path d="M2 21C2 12 11 6 20 7C28 8 31 15 28 21C24 29 12 31 12 26C13 22 9 22 6 24Q3 25 2 21z" fill="#b6d6ec" /><circle cx="7" cy="18" r="2.500" fill="#e95151" /><circle cx="12" cy="13" r="2.500" fill="#61b44a" /><circle cx="18" cy="10.500" r="2.700" fill="#f1a72d" /><circle cx="14" cy="19" r="1.800" fill="#222" /><path d="M17 29L26 6l2 1L19 29z" fill="#d08030" /><path d="M24 6q0-4 6-4 3 4-2 7z" fill="#c19061" />{/if}
        </svg>
      </div>
    {/each}
    <div class="tray">
      {#each tray as name}
        <svg width="22" height="20" viewBox="0 0 22 20" fill="none" stroke="#fff" stroke-width="1.300">
          {#if name === 'up'}<path d="M3.500 13.500L11 6.500l7.500 7" />
          {:else if name === 'battery'}<path d="M7 5h12v10H5v-4" /><path d="M8 7h9v6H7v-3h1z" fill="#fff" stroke="none" /><path d="M20 8v4M2 3v3M5.500 3v3M1 6h5.500v3H1zM4 9v4" />
          {:else if name === 'cloud'}<g stroke="none"><circle cx="9" cy="8.500" r="5.500" fill="#bbb" /><circle cx="15" cy="11" r="4.500" fill="#eee" /><path d="M1 13q0-5 5-4.500L17 14q-1 2-2.500 2H5q-4 0-4-3z" fill="#fff" /></g>
          {:else if name === 'meet'}<rect x="5" y="5" width="9" height="10" rx="2" /><path d="M14 9l4-3v8l-4-3M6 2Q11-.5 16 2M6 18q5 2.500 10 0" />
          {:else if name === 'wifi'}<path d="M4 18Q5 6 18 4M8 18Q9 10 18 8M12 18q1-5 6-6" /><circle cx="16.500" cy="16.500" r="1.300" fill="#fff" />
          {:else}<path d="M1.500 7.500H5L9 4v12l-4-3.500H1.500zM12 7.500q2 2.500 0 5" /><path d="M15 5q4 5 0 10M18 3q5 7 0 14" stroke="#777" />{/if}
        </svg>
      {/each}
      <span class="lang">ENG</span>
      <div class="clock"><span>12:34</span><span>31.01.2024</span></div>
      <svg class="bell" width="20" height="20" viewBox="0 0 20 20" fill="none" stroke="#fff" stroke-width="1.200"><path d="M.7.7h18.600v15.500h-6.500l-2.800 3-2.800-3H.7z" /></svg>
      <i class="peek"></i>
    </div>
  </footer>
</div>

<style>
  :global(body) { overflow: hidden; }
  * { box-sizing: border-box; }
  svg { display: block; flex: none; }
  button { border: 0; padding: 0; font: inherit; color: inherit; }
  .screen { width: 1920px; height: 1080px; display: flex; flex-direction: column; background: #f7f7f7; font-family: "Open Sans", sans-serif; overflow: hidden; }

  .tabs { height: 40px; flex: none; display: flex; background: #cdcdcd; box-shadow: inset 0 -1px 1px #bdbdbd; }
  .slot { display: flex; align-items: center; justify-content: center; }
  .avatar { width: 56px; }
  .spaces { width: 43px; }
  .actions { width: 60px; }
  .tab { width: 300px; display: flex; align-items: center; padding: 0 14px 0 16px; background: #f7f7f7; border-radius: 9px 9px 0 0; font-size: 14px; color: #222; }
  .fav { margin-right: 14px; }
  .tab span { flex: 1; letter-spacing: -.1px; line-height: 20px; padding-bottom: 1px; }
  .newtab { width: 43px; }
  .win { margin-left: auto; display: flex; align-items: center; gap: 43px; padding-right: 22px; }

  .toolbar { height: 48px; flex: none; display: flex; align-items: center; padding-left: 23px; }
  .nav { display: flex; gap: 31px; }
  .address { margin-left: 23px; width: 1393px; height: 37px; border-radius: 19px; background: #fff; box-shadow: 0 0 4px #e4e4e4; display: flex; align-items: center; padding: 0 20px 0 22px; }
  .url { margin: 0 0 0 19px; flex: 1; font-size: 16.5px; letter-spacing: -.07px; color: #111; white-space: nowrap; }
  .url i { font-style: normal; color: #777; }
  .inbar { display: flex; gap: 27px; }
  .actions-right { display: flex; align-items: center; margin-left: 25px; gap: 31px; }
  .actions-right b { width: 1px; height: 20px; background: #ccc; margin: 0 -14px 0 -12.500px; }

  .body { height: 942px; flex: none; display: flex; padding-left: 5px; }
  .page { width: 1860px; height: 938px; display: flex; background: #fff; border-radius: 9px; overflow: hidden; box-shadow: 0 0 3px #bbb; }
  .content { width: 1841px; }
  header { height: 80px; background: #544f62; display: flex; padding-left: 443px; }
  .logo { margin-top: 10px; }
  .logo text { font: 400 27.5px Lato, sans-serif; fill: #fff; }
  .exit { margin: 26.500px 0 0 633px; font: 20.6px/26px "Liberation Sans", sans-serif; color: #fff; text-decoration: none; white-space: nowrap; }
  .form { width: 950px; margin: 45px 0 0 446px; font-family: "Liberation Sans", sans-serif; }
  .title-row { display: flex; gap: 13px; padding-left: 2px; }
  .title { width: 855px; height: 78px; border-radius: 31px; background: #eee; color: #757575; font-size: 20px; display: flex; align-items: center; justify-content: center; padding-bottom: 2px; }
  .close { width: 77px; height: 78px; border-radius: 31px; background: #eee; display: flex; align-items: center; justify-content: center; padding-right: 1px; }

  .map { position: relative; width: 950px; height: 625px; margin-top: 20px; overflow: hidden; }
  .river { fill: none; stroke: #a5d3e6; stroke-width: 4; stroke-linejoin: round; }
  .road { fill: none; stroke: #f3b159; stroke-width: 5; stroke-linejoin: round; opacity: .88; }
  .ring { stroke-width: 1.7; }
  .outer { opacity: .65; }
  .city, .moscow { font: 40px "Noto Sans", sans-serif; fill: #4d4952; stroke: #fff; stroke-opacity: .75; stroke-width: 6; paint-order: stroke; }
  .moscow { font-size: 15px; stroke-width: 2; }
  .country { font: 38px "Noto Sans", sans-serif; fill: #93a094; stroke: #e8f2e8; stroke-width: 4; paint-order: stroke; }
  .stream { font: italic 38px "Noto Sans", sans-serif; fill: #4f88cc; stroke: #d8ecdf; stroke-width: 4; paint-order: stroke; }
  .ctl { position: absolute; height: 35px; background: #fff; border-radius: 3px; box-shadow: 0 1px 3px rgba(0,0,0,.35); display: flex; align-items: center; justify-content: center; font-size: 16px; letter-spacing: .9px; color: #222; }
  .locate { left: 12px; top: 12px; width: 35px; padding-right: 4px; }
  .find { left: 59px; top: 12px; width: 82px; }
  .traffic { left: 677px; top: 12px; width: 113px; gap: 10px; padding-right: 7px; }
  .layers { left: 803px; top: 12px; width: 87px; gap: 5px; padding-left: 5px; }
  .full { left: 903px; top: 12px; width: 34px; }
  .zoom { position: absolute; left: 12px; top: 135px; width: 35px; display: flex; flex-direction: column; align-items: center; }
  .zoom .ctl { position: relative; width: 35px; z-index: 1; padding-right: 1px; padding-bottom: 1px; }
  .track { width: 9px; height: 187px; background: rgba(255,255,255,.4); border: solid rgba(110,130,110,.45); border-width: 0 2px; padding-top: 128px; display: flex; justify-content: center; }
  .handle { flex: none; width: 35px; height: 19px; background: #fff; border-radius: 3px; box-shadow: 0 1px 3px rgba(0,0,0,.35); font-size: 12px; line-height: 17px; text-align: center; color: #555; }
  .open { left: 10px; top: 585px; width: 217px; height: 30px; font-size: 15px; letter-spacing: 0; gap: 7px; text-decoration: none; white-space: nowrap; }
  .note { position: absolute; background: rgba(255,255,255,.7); border-radius: 3px; font: 14px/18px "DejaVu Sans", sans-serif; color: #222; white-space: nowrap; text-align: center; }
  .note a { color: #222; }
  .create { left: 237px; top: 591px; width: 176px; height: 19px; letter-spacing: .98px; }
  .copy { left: 673px; top: 595px; width: 273px; height: 18px; font-size: 13px; letter-spacing: .97px; }
  .scale { position: absolute; left: 797px; top: 561px; width: 95px; height: 19px; display: flex; align-items: center; font: 13px "DejaVu Sans", sans-serif; letter-spacing: .8px; color: #222; }
  .scale i { flex: 1; height: 12px; border-left: 2px solid #000; background: linear-gradient(#000, #000) 0 50% / 100% 2px no-repeat; }
  .scale .end { border-left: 0; border-right: 2px solid #000; }
  .scale span { width: 63px; line-height: 19px; text-align: center; background: rgba(255,255,255,.7); border-radius: 3px; }
  .ruler { left: 903px; top: 552px; width: 34px; }

  .options { display: flex; gap: 24.500px; padding-top: 32px; }
  .pill { width: 150px; height: 58px; border-radius: 29px; background: #eee; font-size: 20px; color: #111; display: flex; align-items: center; justify-content: center; }
  .pill:nth-child(n + 2) { letter-spacing: .6px; }
  .submit { margin-left: auto; width: 151px; height: 58px; border-radius: 29px; background: #543b94; color: #fff; font-size: 16.6px; letter-spacing: 0; }

  .scrollbar { width: 19px; background: #fcfcfc; display: flex; flex-direction: column; align-items: center; padding-top: 12px; }
  .thumb { width: 11px; height: 799px; margin-top: 9px; border-radius: 6px; background: #8a8a8a; }
  .down { margin-top: 91px; }

  aside { width: 54px; height: 942px; display: flex; flex-direction: column; align-items: center; padding-top: 15px; }
  .side-top { display: flex; flex-direction: column; gap: 26.200px; }
  hr { width: 35px; height: 1px; border: 0; background: #bbb; margin: 28px 0 0; }
  .add { margin-top: 31px; }
  .side-end { margin-top: auto; display: flex; flex-direction: column; align-items: center; padding-bottom: 15px; }
  .ext { margin: 18px 0 28px; }

  footer { height: 50px; flex: none; background: #1f1f1e; display: flex; }
  .start { width: 60px; display: flex; align-items: center; justify-content: center; }
  .search { width: 360px; background: #f1f1f1; border: 1px solid #bbb; display: flex; align-items: center; padding-left: 13px; font-size: 18px; color: #333; }
  .search span { margin-left: 14px; flex: 1; }
  .task { width: 63px; padding-right: 4px; display: flex; align-items: center; justify-content: center; }
  .app { width: 62px; display: flex; align-items: center; justify-content: center; }
  .running { background: linear-gradient(#76b9ed, #76b9ed) center bottom / 51px 3px no-repeat; }
  .active { background: linear-gradient(#76b9ed, #76b9ed) center bottom / 100% 3px no-repeat #4b4b4b; }
  .ws { font: 800 9.5px "Open Sans", sans-serif; fill: #fff; }
  .tray { margin-left: auto; display: flex; align-items: center; gap: 8px; color: #fff; }
  .lang { width: 29px; margin-left: 3px; font-size: 14.8px; letter-spacing: -.3px; }
  .clock { width: 74px; margin-left: 5px; display: flex; flex-direction: column; align-items: center; font-size: 14.3px; line-height: 23px; letter-spacing: -.5px; white-space: nowrap; }
  .bell { margin-left: 14px; margin-right: 17px; }
  .peek { width: 6px; height: 50px; border-left: 1px solid #666; }
</style>
